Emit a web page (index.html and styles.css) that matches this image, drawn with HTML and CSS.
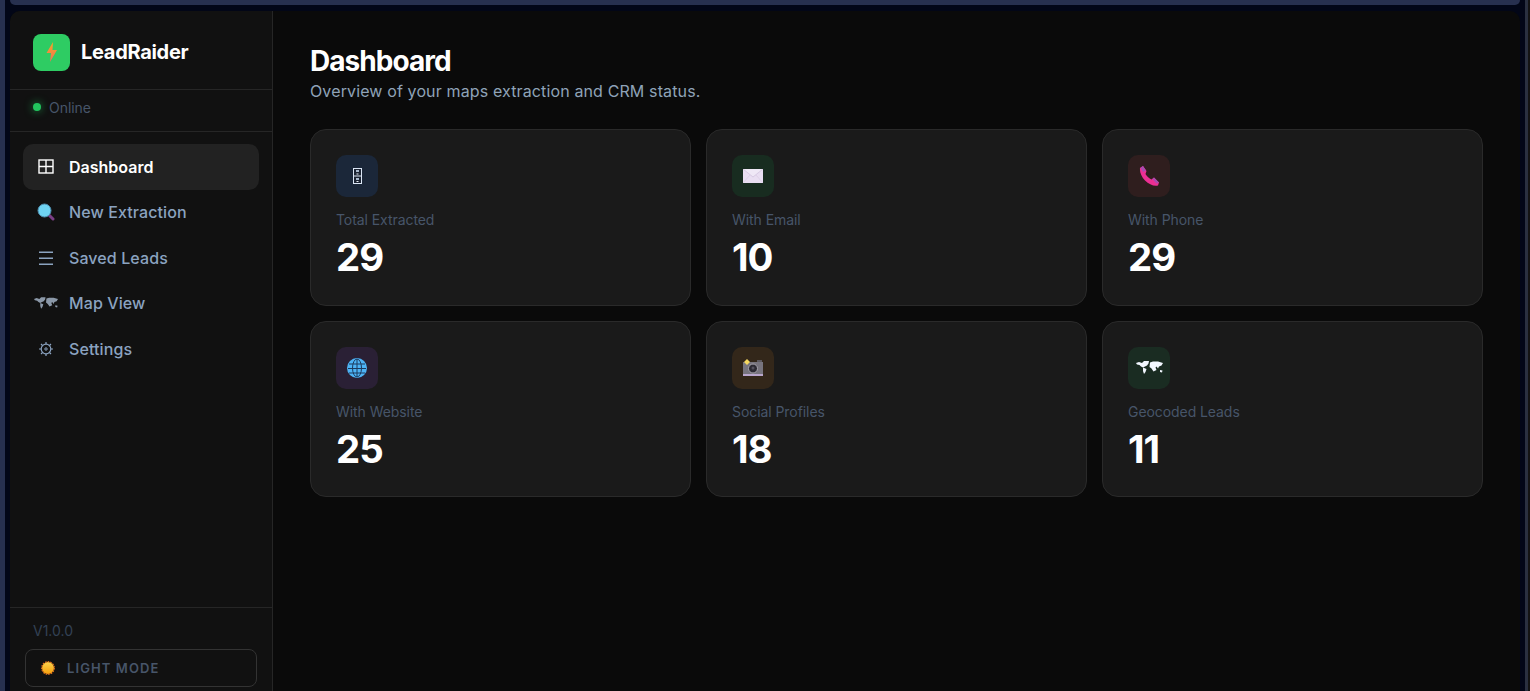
FILE: index.html
```html
<!DOCTYPE html>
<html lang="en">
<head>
    <meta charset="UTF-8">
    <title>LeadRaider</title>
    <link rel="stylesheet" href="styles.css">
</head>
<body>
<svg class="defs" width="0" height="0">
    <defs>
        <linearGradient id="bolt" x1="0" y1="0" x2="0" y2="1">
            <stop offset="0" stop-color="#f5a623"/>
            <stop offset="1" stop-color="#f0705a"/>
        </linearGradient>
        <linearGradient id="sun" x1="0" y1="0" x2="0" y2="1">
            <stop offset="0" stop-color="#fcd34d"/>
            <stop offset="1" stop-color="#f59e0b"/>
        </linearGradient>
        <symbol id="worldmap" viewBox="0 0 27 13">
            <path d="M0 2 L3 1 L6 2 L8 0 L13 0 L12.5 2.5 L11 4.5 L9 5.5 L7 6.5 L5 5.5 L3.5 4 L1 3.5 Z"/>
            <path d="M7 6.5 L10.5 8 L9.5 11 L8 13 L7 10 Z"/>
            <path d="M14 1.5 L17 0.5 L22 0.5 L27 2 L25.5 4.5 L23 5.5 L22 7.5 L20.5 5.5 L19.5 6.5 L20.5 9 L17.5 10.5 L15.5 7.5 L13.5 6 Z"/>
            <path d="M24 9 L26.5 9.5 L26 11.5 L24 11 Z"/>
        </symbol>
    </defs>
</svg>
<div class="topbar"></div>
<div class="app">
    <aside class="sidebar">
        <div class="brand">
            <div class="brand_logo">
                <svg width="12" height="20" viewBox="0 0 12 20">
                    <path d="M7 0 L0.5 11 L5 11 L4 20 L11 8 L6.5 8 Z" fill="url(#bolt)"/>
                </svg>
            </div>
            <span class="brand_name">LeadRaider</span>
        </div>
        <div class="status"><i class="status_dot"></i>Online</div>
        <ul class="nav">
            <li class="active">
                <span class="nav_icon">
                    <svg width="16" height="15" viewBox="0 0 16 15" fill="none" stroke="#fff" stroke-width="1.4">
                        <rect x="1" y="1" width="14" height="13"/>
                        <path d="M8 1 V14 M1 7.5 H15"/>
                    </svg>
                </span>
                Dashboard
            </li>
            <li>
                <span class="nav_icon">
                    <svg width="18" height="18" viewBox="0 0 18 18">
                        <path d="M11 11 L16 16" stroke="#7b3f86" stroke-width="3" stroke-linecap="round"/>
                        <circle cx="7.5" cy="7.5" r="6.5" fill="#6fd3f2" stroke="#4f8fb0" stroke-width="1"/>
                    </svg>
                </span>
                New Extraction
            </li>
            <li>
                <span class="nav_icon">
                    <svg width="14" height="14" viewBox="0 0 14 14" fill="#8ba3c0">
                        <rect y="0.5" width="14" height="1.5"/>
                        <rect y="6.5" width="14" height="1.5"/>
                        <rect y="12.5" width="14" height="1.5"/>
                    </svg>
                </span>
                Saved Leads
            </li>
            <li>
                <span class="nav_icon map_icon">
                    <svg width="24" height="12"><use href="#worldmap"/></svg>
                </span>
                Map View
            </li>
            <li>
                <span class="nav_icon">
                    <svg width="14" height="14" viewBox="0 0 14 14" fill="none" stroke="#8ba3c0">
                        <circle cx="7" cy="7" r="4.8" stroke-width="1.2"/>
                        <circle cx="7" cy="7" r="1.2" stroke-width="1"/>
                        <path d="M7 0 V2 M7 12 V14 M0 7 H2 M12 7 H14 M2 2 L3.5 3.5 M10.5 10.5 L12 12 M12 2 L10.5 3.5 M3.5 10.5 L2 12" stroke-width="1.2"/>
                    </svg>
                </span>
                Settings
            </li>
        </ul>
        <div class="sidebar_foot">
            <div class="version">V1.0.0</div>
            <button class="mode_btn">
                <svg width="14" height="14" viewBox="0 0 14 14">
                    <circle cx="7" cy="7" r="6" fill="url(#sun)"/>
                    <circle cx="7" cy="7" r="6.3" fill="none" stroke="#e8751e" stroke-width="1.2" stroke-dasharray="1.6 1"/>
                </svg>
                LIGHT MODE
            </button>
        </div>
    </aside>
    <main class="main">
        <h1>Dashboard</h1>
        <p class="sub">Overview of your maps extraction and CRM status.</p>
        <div class="cards">
            <div class="card">
                <div class="card_icon blue">
                    <svg width="9" height="16" viewBox="0 0 9 16">
                        <rect x="0.5" y="0.5" width="8" height="15" fill="#1c2433" stroke="#dbe6f5"/>
                        <path d="M1 8 H8" stroke="#dbe6f5"/>
                        <rect x="3" y="2" width="3" height="2" fill="#a9b8cc"/>
                        <rect x="3" y="10" width="3" height="2" fill="#a9b8cc"/>
                        <rect x="3.5" y="5.5" width="2" height="1" fill="#e8edf5"/>
                        <rect x="3.5" y="13" width="2" height="1" fill="#e8edf5"/>
                    </svg>
                </div>
                <div class="card_label">Total Extracted</div>
                <div class="card_num">29</div>
            </div>
            <div class="card">
                <div class="card_icon green">
                    <svg width="20" height="14" viewBox="0 0 20 14">
                        <rect width="20" height="14" fill="#e9def2"/>
                        <path d="M0 0 L10 8 L20 0" fill="#efe8f6" stroke="#cfc0dc" stroke-width="0.7"/>
                        <path d="M0 14 L7 6 M20 14 L13 6" stroke="#d8cbe4" stroke-width="0.7"/>
                    </svg>
                </div>
                <div class="card_label">With Email</div>
                <div class="card_num">10</div>
            </div>
            <div class="card">
                <div class="card_icon red">
                    <svg width="20" height="20" viewBox="0 0 20 20">
                        <path d="M1 2 L4 0 L7.5 5 L6.5 8 C8 10.5 10 12.5 12.5 13.5 L15 11.5 L20 16.5 L19 19.5 C15 20.5 10 18.5 6 14.5 C2.5 11 0.5 6 1 2 Z" fill="#ec2f93"/>
                        <path d="M1.5 1.7 L4 0 L7 4.5 L4 6 Z M13.5 13 L15 11.5 L20 16.5 L17.5 17.5 Z" fill="#a84bb0"/>
                    </svg>
                </div>
                <div class="card_label">With Phone</div>
                <div class="card_num">29</div>
            </div>
            <div class="card">
                <div class="card_icon purple">
                    <svg width="20" height="20" viewBox="0 0 20 20" fill="none">
                        <circle cx="10" cy="10" r="10" fill="#4db3f5"/>
                        <g stroke="#1c3a5e" stroke-width="1">
                            <ellipse cx="10" cy="10" rx="4.5" ry="9"/>
                            <path d="M10 1 V19 M2 6 H18 M1 10.5 H19 M2 15 H18"/>
                        </g>
                    </svg>
                </div>
                <div class="card_label">With Website</div>
                <div class="card_num">25</div>
            </div>
            <div class="card">
                <div class="card_icon amber">
                    <svg width="21" height="17" viewBox="0 0 21 17">
                        <rect x="14" y="1" width="5" height="2" fill="#5e5a60"/>
                        <rect y="3" width="20" height="14" fill="#77747e"/>
                        <rect y="15" width="20" height="2" fill="#b9a6cc"/>
                        <circle cx="10" cy="9.5" r="4.5" fill="#2c2a33" stroke="#a7a4ad"/>
                        <circle cx="10" cy="9" r="1.5" fill="#55525e"/>
                        <path d="M4 0 L7 3 L4 6 L1 3 Z" fill="#f6d860"/>
                    </svg>
                </div>
                <div class="card_label">Social Profiles</div>
                <div class="card_num">18</div>
            </div>
            <div class="card">
                <div class="card_icon teal geo_icon">
                    <svg width="27" height="13"><use href="#worldmap"/></svg>
                </div>
                <div class="card_label">Geocoded Leads</div>
                <div class="card_num">11</div>
            </div>
        </div>
    </main>
</div>
</body>
</html>
```
FILE: styles.css
```css
* {
    margin: 0;
    padding: 0;
    box-sizing: border-box;
}
html {
    height: 100%;
    background: #141414;
}
body {
    height: 100%;
    display: flex;
    flex-direction: column;
    overflow: hidden;
    margin-right: 2px;
    padding: 0 5px;
    background: #020617;
    border-left: 5px solid #27304f;
    border-right: 3px solid #2a3040;
    font-family: Inter, "Liberation Sans", sans-serif;
}
ul, li {
    list-style: none;
}
.defs {
    position: absolute;
}
.topbar {
    flex: none;
    height: 5px;
    background: #27304f;
    border-radius: 0 0 8px 8px;
}
.app {
    flex: 1;
    display: flex;
    min-height: 0;
    margin-top: 6px;
    border-radius: 10px 10px 0 0;
    overflow: hidden;
    background: #0a0a0a;
}

/* sidebar */
.sidebar {
    flex: none;
    width: 263px;
    display: flex;
    flex-direction: column;
    background: #111111;
    border-right: 1px solid #262626;
}
.brand {
    height: 79px;
    display: flex;
    align-items: center;
    gap: 11px;
    padding: 4px 23px 0;
    border-bottom: 1px solid #262626;
}
.brand_logo {
    width: 37px;
    height: 37px;
    display: flex;
    align-items: center;
    justify-content: center;
    background: #2ecc63;
    border-radius: 8px;
}
.brand_name {
    font-size: 20px;
    font-weight: 700;
    letter-spacing: -0.3px;
    color: #fff;
}
.status {
    height: 42px;
    display: flex;
    align-items: center;
    gap: 8px;
    padding: 0 23px 7px;
    font-size: 14px;
    letter-spacing: -0.05px;
    color: #475569;
    border-bottom: 1px solid #262626;
}
.status_dot {
    width: 8px;
    height: 8px;
    border-radius: 50%;
    background: #22c55e;
    box-shadow: 0 0 8px rgba(34, 197, 94, 0.7);
}
.nav {
    flex: 1;
    padding: 12px 13px 0;
}
.nav li {
    height: 45.5px;
    display: flex;
    align-items: center;
    gap: 11px;
    padding: 0 11px;
    border-radius: 10px;
    font-size: 16px;
    font-weight: 500;
    letter-spacing: 0.1px;
    color: #8ba3c0;
}
.nav .active {
    background: #222222;
    font-weight: 600;
    letter-spacing: 0;
    color: #fff;
}
.nav_icon {
    width: 24px;
    display: flex;
    justify-content: center;
}
.map_icon {
    fill: #8b98a8;
}
.sidebar_foot {
    height: 84px;
    padding: 14px 15px 0;
    border-top: 1px solid #262626;
}
.version {
    padding-left: 8px;
    font-size: 14px;
    line-height: 17px;
    color: #334155;
}
.mode_btn {
    width: 232px;
    height: 38px;
    margin-top: 10px;
    display: flex;
    align-items: center;
    gap: 12px;
    padding: 0 15px;
    background: transparent;
    border: 1px solid #333333;
    border-radius: 8px;
    font-family: inherit;
    font-size: 13px;
    font-weight: 600;
    letter-spacing: 1.1px;
    color: #475569;
}

/* main */
.main {
    flex: 1;
    padding: 33px 37px;
}
.main h1 {
    font-size: 28px;
    line-height: 34px;
    font-weight: 700;
    letter-spacing: -0.95px;
    color: #fff;
}
.sub {
    margin-top: 1px;
    font-size: 16px;
    line-height: 24px;
    letter-spacing: 0.13px;
    color: #8fa3b8;
}
.cards {
    display: grid;
    grid-template-columns: repeat(3, 1fr);
    gap: 15px;
    margin-top: 26px;
}
.card {
    height: 176.5px;
    padding: 25px;
    background: #1a1a1a;
    border: 1px solid #2a2a2a;
    border-radius: 16px;
}
.card_icon {
    width: 42px;
    height: 42px;
    display: flex;
    align-items: center;
    justify-content: center;
    border-radius: 10px;
}
.blue { background: #1b2739; }
.green { background: #182c20; }
.red { background: #2f1e1e; }
.purple { background: #2a2035; }
.amber { background: #33271a; }
.teal { background: #1a2c22; }
.geo_icon {
    fill: #f2f7ff;
}
.card_label {
    margin-top: 14px;
    font-size: 14px;
    line-height: 17px;
    letter-spacing: -0.07px;
    color: #475569;
}
.card_num {
    margin-top: 5px;
    font-size: 38.4px;
    line-height: 48px;
    font-weight: 700;
    letter-spacing: -1px;
    color: #fff;
}
```
